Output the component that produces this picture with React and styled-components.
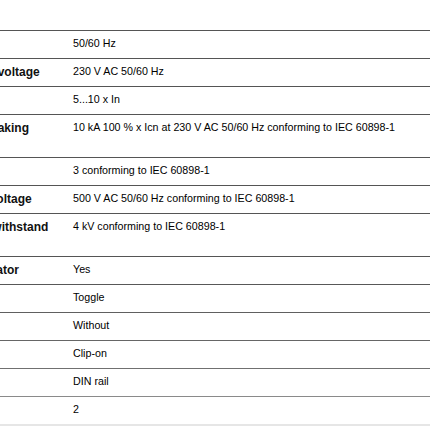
import styled, { createGlobalStyle } from 'styled-components'

const specs = [
  { label: 'Rated frequency', value: '50/60 Hz' },
  { label: 'Rated operational voltage', value: '230 V AC 50/60 Hz' },
  { label: 'Magnetic tripping', value: '5...10 x In' },
  {
    label: 'Rated ultimate breaking capacity',
    value: '10 kA 100 % x Icn at 230 V AC 50/60 Hz conforming to IEC 60898-1',
  },
  { label: 'Limiting class', value: '3 conforming to IEC 60898-1' },
  { label: 'Rated insulation voltage', value: '500 V AC 50/60 Hz conforming to IEC 60898-1' },
  { label: 'Nominal impulse withstand voltage', value: '4 kV conforming to IEC 60898-1' },
  { label: 'Trip position indicator', value: 'Yes' },
  { label: 'Control type', value: 'Toggle', line: '#585858' },
  { label: 'Locking device', value: 'Without', line: '#606060' },
  { label: 'Fixing mode', value: 'Clip-on', line: '#666' },
  { label: 'Mounting', value: 'DIN rail', line: '#707070' },
  { label: 'Number of poles', value: '2', line: '#8a8a8a' },
]

const GlobalStyle = createGlobalStyle`
  html, body {
    margin: 0;
    padding: 0;
    background: #fff;
  }
  body {
    font-family: "Liberation Sans", Arial, sans-serif;
    color: #111;
  }
`

const Page = styled.div`
  width: 430px;
  height: 430px;
  overflow: hidden;
  padding-top: 30px;
  box-sizing: border-box;
`

const Table = styled.div`
  margin-left: -112px;
  width: 542px;
  border-bottom: 2px solid #e6e6e6;
`

const Row = styled.div`
  display: grid;
  grid-template-columns: 175px 1fr;
  border-top: 1px solid ${(p) => p.$line || '#555'};
`

const Label = styled.div`
  box-sizing: border-box;
  padding: 6px 8px 6px 5px;
  font-size: 12px;
  line-height: 15px;
  font-weight: bold;
  color: #111;
`

const Value = styled.div`
  padding: 5px 10px 0;
  font-size: 10.7px;
  line-height: 15px;
  color: #000;
`

const App = () => {
  return (
    <Page>
      <GlobalStyle />
      <Table>
        {specs.map((spec) => (
          <Row key={spec.label} $line={spec.line}>
            <Label>{spec.label}</Label>
            <Value>{spec.value}</Value>
          </Row>
        ))}
      </Table>
    </Page>
  )
}

export default App
